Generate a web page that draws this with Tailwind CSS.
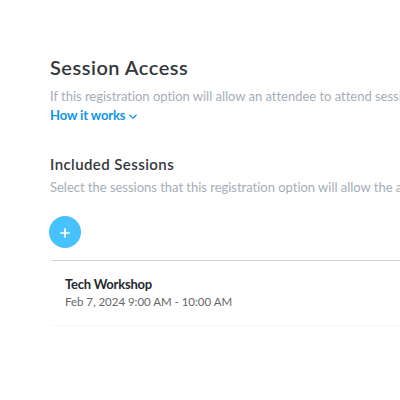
<!DOCTYPE html>
<html lang="en">
<head>
    <meta charset="UTF-8">
    <meta name="viewport" content="width=device-width, initial-scale=1.0">
    <title>Session Access</title>
    <script src="https://cdn.jsdelivr.net/npm/@tailwindcss/browser@4"></script>
</head>
<body class="bg-white h-screen overflow-hidden font-['Lato',sans-serif]">
    <main class="pl-[50px] pt-[53px] whitespace-nowrap">
        <section>
            <h1 class="text-[20px] leading-7 font-semibold tracking-[0.5px] text-[#33383c]">Session Access</h1>
            <p class="mt-[6px] text-[13px] leading-[19px] tracking-[-0.02px] text-[#a5adb7]">If this registration option will allow an attendee to attend sessi</p>
            <a href="#" class="flex items-center gap-1 text-[13px] leading-[19px] font-bold tracking-[-0.12px] text-[#0e94e8]">
                How it works
                <svg class="w-2 h-[5px] mt-px" viewBox="0 0 8 5" fill="none" stroke="currentColor" stroke-width="1.3"><path d="M0.5 0.7 4 4.1 7.5 0.7"/></svg>
            </a>
        </section>
        <section class="mt-[29px]">
            <h2 class="text-[15px] leading-5 font-semibold tracking-[0.42px] text-[#33383c]">Included Sessions</h2>
            <p class="mt-[4px] text-[13px] leading-[19px] tracking-[-0.02px] text-[#a5adb7]">Select the sessions that this registration option will allow the a</p>
            <button type="button" aria-label="Add session" class="mt-[19px] -ml-px flex size-8 items-center justify-center rounded-full bg-[#47c2ff] pt-px text-white">
                <svg class="size-[10px]" viewBox="0 0 10 10" fill="none" stroke="currentColor" stroke-width="1.7"><path d="M5 0.2v9.6M0.2 5h9.6"/></svg>
            </button>
        </section>
        <ul class="mt-3 ml-[2px] border-t border-[#d0d0d0]">
            <li class="border-b border-[#f7f7f7] pl-[13px] pt-[14px] pb-[15px]">
                <div class="text-[13px] leading-[19px] font-bold tracking-[-0.23px] text-[#25282b]">Tech Workshop</div>
                <div class="text-[11.5px] leading-4 tracking-[-0.03px] text-[#686868]">Feb 7, 2024 9:00 AM - 10:00 AM</div>
            </li>
        </ul>
    </main>
</body>
</html>
